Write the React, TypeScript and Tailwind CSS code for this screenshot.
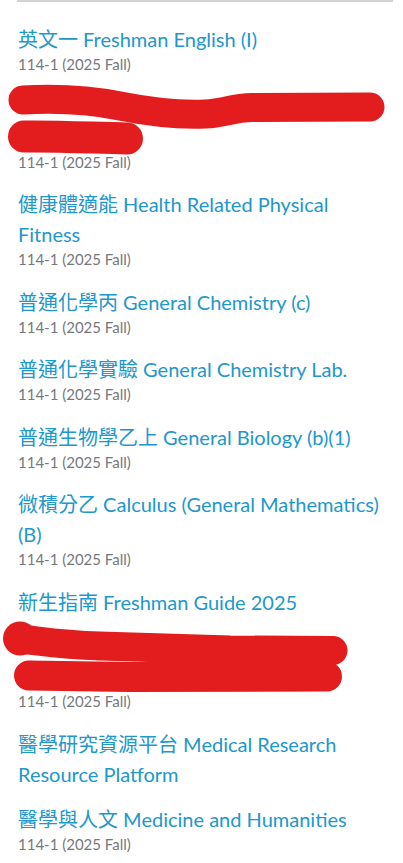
type Course = {
  title?: string;
  term?: string;
  redacted?: "title" | "extra";
};

const TERM = "114-1 (2025 Fall)";

const courses: Course[] = [
  { title: "英文一 Freshman English (I)", term: TERM },
  { redacted: "title", term: TERM },
  { title: "健康體適能 Health Related Physical Fitness", term: TERM },
  { title: "普通化學丙 General Chemistry (c)", term: TERM },
  { title: "普通化學實驗 General Chemistry Lab.", term: TERM },
  { title: "普通生物學乙上 General Biology (b)(1)", term: TERM },
  { title: "微積分乙 Calculus (General Mathematics) (B)", term: TERM },
  { title: "新生指南 Freshman Guide 2025", redacted: "extra", term: TERM },
  { title: "醫學研究資源平台 Medical Research Resource Platform" },
  { title: "醫學與人文 Medicine and Humanities", term: TERM },
];

// red marker scribbles over private text
function ScribbleTitle() {
  return (
    <div className="relative h-[60px]">
      <svg
        className="absolute -left-[18px] top-0 w-[403px] h-[60px] overflow-visible"
        viewBox="0 0 403 60"
        fill="none"
      >
        <path
          d="M23 8 C60 6, 90 8, 120 14 C150 20, 180 23, 205 22 C225 21, 232 16, 252 15.5 L370 15"
          stroke="#e31d1e"
          strokeWidth={29}
          strokeLinecap="round"
          strokeLinejoin="round"
        />
        <path
          d="M24 44.5 C60 44, 95 46, 127 46.5"
          stroke="#e31d1e"
          strokeWidth={32}
          strokeLinecap="round"
        />
      </svg>
    </div>
  );
}

function ScribbleExtra() {
  return (
    <div className="relative h-[74.5px]">
      <svg
        className="absolute -left-[18px] top-0 w-[403px] h-[75px] overflow-visible"
        viewBox="0 0 403 75"
        fill="none"
      >
        <circle cx={20} cy={21.5} r={17} fill="#e31d1e" />
        <path
          d="M20 22 C40 24, 60 28, 100 29 L230 33 L333 33.5"
          stroke="#e31d1e"
          strokeWidth={29}
          strokeLinecap="round"
          strokeLinejoin="round"
        />
        <path
          d="M29 58.5 L130 60 L327 59.5"
          stroke="#e31d1e"
          strokeWidth={30}
          strokeLinecap="round"
          strokeLinejoin="round"
        />
      </svg>
    </div>
  );
}

function CourseRow({ course }: { course: Course }) {
  return (
    <div className={course.term ? "" : "-mb-[2px]"}>
      {course.redacted === "title" ? (
        <ScribbleTitle />
      ) : (
        <p className="text-[20px] leading-[30px] text-[#2197cc]">{course.title}</p>
      )}
      {course.redacted === "extra" && <ScribbleExtra />}
      {course.term && (
        <p className="text-[15px] leading-[20px] text-[#76797c]">{course.term}</p>
      )}
    </div>
  );
}

export default function App() {
  return (
    <div
      className="min-h-[863px] bg-white overflow-hidden"
      style={{ fontFamily: 'Lato, "Noto Sans CJK TC", sans-serif' }}
    >
      <div className="ml-[17px] mr-[10px] h-[2px] bg-[#d2d5d7]" />
      <div className="pl-[18px] pr-[10px] pt-[22px] flex flex-col gap-[17.5px]">
        {courses.map((c, i) => (
          <CourseRow key={i} course={c} />
        ))}
      </div>
    </div>
  );
}
